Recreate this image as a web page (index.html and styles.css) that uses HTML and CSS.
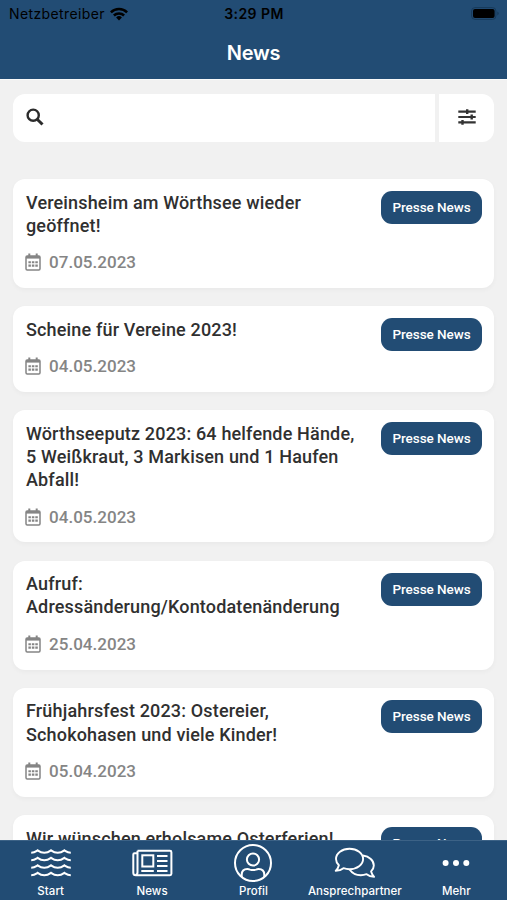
FILE: index.html
```html
<!DOCTYPE html>
<html lang="de">
<head>
<meta charset="utf-8">
<meta name="viewport" content="width=device-width, initial-scale=1">
<title>News</title>
<link rel="stylesheet" href="styles.css">
</head>
<body>
<svg width="0" height="0" class="defs" aria-hidden="true">
  <symbol id="calendar" viewBox="0 0 16 18">
    <path d="M4.300.4v3M11.700.4v3" stroke="currentColor" stroke-width="2"/>
    <rect x="1" y="3" width="14" height="14" rx="1.200" fill="none" stroke="currentColor" stroke-width="1.500"/>
    <path d="M1 3h14v2.600H1z" fill="currentColor"/>
    <path d="M3.400 9.300h9.400M3.400 12.600h9.400" stroke="currentColor" stroke-width="2.100" stroke-dasharray="2.500 .950"/>
  </symbol>
</svg>
<div class="app">
  <header class="header">
    <div class="status">
      <div class="carrier">Netzbetreiber
        <svg class="wifi" viewBox="0 0 18 14"><g fill="none" stroke="#000" stroke-width="2.5"><path d="M.9 5.3a11.5 11.5 0 0 1 16.2 0"/><path d="M3.9 8.5a7.2 7.2 0 0 1 10.2 0"/></g><path d="M9 13.4 6.1 10.5a4.1 4.1 0 0 1 5.8 0z"/></svg>
      </div>
      <div class="time">3:29 PM</div>
      <svg class="battery" viewBox="0 0 28 13"><rect x=".6" y=".6" width="24.3" height="11.8" rx="3.4" fill="none" stroke="#173a5a"/><rect x="2" y="2" width="21.6" height="9" rx="2"/><path d="M26.3 4.6q1.4.6 1.4 1.9t-1.4 1.9z" fill="#173a5a"/></svg>
    </div>
    <h1 class="heading">News</h1>
  </header>
  <main class="content">
    <div class="search">
      <div class="field"><svg class="lens" viewBox="0 0 18 18"><circle cx="7.2" cy="7.2" r="5.6" fill="none" stroke="#2b2b2b" stroke-width="2.4"/><path d="m11.2 11.2 5.3 5.3" stroke="#2b2b2b" stroke-width="3"/></svg></div>
      <div class="filter"><svg class="sliders" viewBox="0 0 18 16"><path d="M.3 2.600h17.400M.3 8h17.400M.3 13.400h17.400" stroke="#333" stroke-width="2.200"/><path d="M9.200.2v4.800M13.700 5.600v4.800M4.500 11v4.800" stroke="#333" stroke-width="2.400"/></svg></div>
    </div>
    <article class="card"><div class="body"><h2 class="title">Vereinsheim am Wörthsee wieder<br>geöffnet!</h2><div class="date"><svg class="cal"><use href="#calendar"/></svg>07.05.2023</div></div><span class="tag">Presse News</span></article>
    <article class="card"><div class="body"><h2 class="title">Scheine für Vereine 2023!</h2><div class="date"><svg class="cal"><use href="#calendar"/></svg>04.05.2023</div></div><span class="tag">Presse News</span></article>
    <article class="card"><div class="body"><h2 class="title">Wörthseeputz 2023: 64 helfende Hände,<br>5 Weißkraut, 3 Markisen und 1 Haufen<br>Abfall!</h2><div class="date"><svg class="cal"><use href="#calendar"/></svg>04.05.2023</div></div><span class="tag">Presse News</span></article>
    <article class="card"><div class="body"><h2 class="title">Aufruf:<br>Adressänderung/Kontodatenänderung</h2><div class="date"><svg class="cal"><use href="#calendar"/></svg>25.04.2023</div></div><span class="tag">Presse News</span></article>
    <article class="card"><div class="body"><h2 class="title">Frühjahrsfest 2023: Ostereier,<br>Schokohasen und viele Kinder!</h2><div class="date"><svg class="cal"><use href="#calendar"/></svg>05.04.2023</div></div><span class="tag">Presse News</span></article>
    <article class="card"><div class="body"><h2 class="title">Wir wünschen erholsame Osterferien!</h2></div><span class="tag">Presse News</span></article>
  </main>
  <nav class="tabs">
    <div class="tab"><svg class="icon" viewBox="0 0 42 38"><g fill="none" stroke="#fff" stroke-width="2.100"><path id="wave" d="M1.200 8.700C4.500 8.700 5.500 7.700 7.600 6.300q6.700 4.800 13.400 0 6.700 4.800 13.400 0c2.100 1.400 3.100 2.400 6.400 2.400"/><use href="#wave" y="7.500"/><use href="#wave" y="15"/><use href="#wave" y="22.500"/></g></svg><span>Start</span></div>
    <div class="tab"><svg class="icon" viewBox="0 0 42 38"><g fill="none" stroke="#fff" stroke-width="2"><path d="M6.500 6.800h32.500q1.400 0 1.400 1.400v21.600q0 1.400-1.400 1.400H4.800q-2.500 0-2.500-2.500V10.500q0-1.200 1.200-1.200h3"/><path d="M6.500 6.800v21.500q0 2.500-2 2.700"/><rect x="11.300" y="11.300" width="11" height="11.200"/><path d="M26 12h10.500M26 17h10.500M26 22h10.500M10.300 27h12.500M26 27h10.500"/></g></svg><span>News</span></div>
    <div class="tab"><svg class="icon" viewBox="0 0 42 38"><g fill="none" stroke="#fff" stroke-width="2"><circle cx="21" cy="19" r="18"/><circle cx="21" cy="15.500" r="6.100"/><path d="M9.700 33v-2.200q0-5.700 5.700-5.700 1.300 0 2.600.5 3 1 6 0 1.300-.5 2.600-.5 5.700 0 5.700 5.700v2.200"/></g></svg><span>Profil</span></div>
    <div class="tab"><svg class="icon" viewBox="0 0 42 38"><g fill="none" stroke="#fff" stroke-width="1.900" stroke-linejoin="round"><path d="M15.500 4.800c7.500 0 13.600 4.500 13.600 10.200S23 25.200 15.500 25.200q-3.200 0-6-1-3.200 2.600-7.800 2.600 2.600-2.800 3.200-5.600Q2 18.500 2 15C2 9.300 8 4.800 15.500 4.800z"/><path d="M29 11.500c6.300.9 10.800 5 10.800 9.900q0 3.300-2.700 6 .7 2.700 3 5.400-4.300 0-7.500-2.600-2.700 1-5.800 1-7.300 0-11.400-6"/></g></svg><span>Ansprechpartner</span></div>
    <div class="tab"><svg class="icon" viewBox="0 0 42 38"><g fill="#fff"><circle cx="10.600" cy="19" r="3"/><circle cx="21" cy="19" r="3"/><circle cx="31.300" cy="19" r="3"/></g></svg><span>Mehr</span></div>
  </nav>
</div>
</body>
</html>
```
FILE: styles.css
```css
* { box-sizing: border-box; }
body { margin: 0; font-family: Roboto, sans-serif; background: #f1f1f1; }
.defs { position: absolute; }
.app { height: 900px; display: flex; flex-direction: column; overflow: hidden; }
.header { flex: none; height: 79px; background: #224c74; }
.status { height: 27px; padding: 0 8px 0 9px; display: grid; grid-template-columns: 1fr auto 1fr; align-items: center; font: 400 14px Inter, sans-serif; color: #000; }
.carrier { display: flex; align-items: center; gap: 5px; letter-spacing: .38px; }
.wifi { width: 18px; height: 14px; }
.time { font-weight: 600; letter-spacing: .45px; }
.battery { width: 28px; height: 13px; justify-self: end; }
.heading { margin: 0; text-align: center; color: #fff; font: 600 20px/52px Inter, sans-serif; letter-spacing: -.2px; }
.content { flex: 1; min-height: 0; overflow: hidden; padding: 13.500px 13px 0; border-top: 1px solid #fafafa; }
.search { display: flex; gap: 4px; height: 48px; margin-bottom: 37.500px; }
.field { flex: 1; background: #fff; border-radius: 12px 0 0 12px; display: flex; align-items: center; padding-left: 12.500px; }
.filter { width: 55px; background: #fff; border-radius: 0 12px 12px 0; display: flex; align-items: center; justify-content: center; }
.lens { width: 18px; height: 18px; margin-top: -1px; }
.sliders { width: 18px; height: 16px; margin-top: -1px; }
.card { display: flex; justify-content: space-between; align-items: flex-start; margin-bottom: 18.250px; padding: 11.500px 12px 14.200px 13px; background: #fff; border-radius: 12px; box-shadow: 0 2px 5px rgba(0, 0, 0, .035); }
.title { margin: 0 0 13.700px; font-size: 18px; line-height: 23.200px; font-weight: 500; letter-spacing: .16px; color: #303030; white-space: nowrap; }
.date { display: flex; align-items: center; gap: 8px; height: 23.200px; font-size: 17px; font-weight: 500; letter-spacing: .03px; color: #858585; }
.cal { width: 16px; height: 18px; margin: 0 0 0 -1px; }
.tag { flex: none; width: 101px; height: 33px; margin-top: .5px; border-radius: 11px; background: #224c74; color: #fff; text-align: center; font-size: 13.500px; line-height: 32.500px; font-weight: 500; letter-spacing: -.05px; }
.tabs { flex: none; height: 60px; display: grid; grid-template-columns: repeat(5, 1fr); background: #224c74; border-top: 1px solid #3c6286; }
.tab { display: flex; flex-direction: column; align-items: center; min-width: 0; padding-top: 3px; color: #fff; font: 500 11.500px/15px Inter, sans-serif; letter-spacing: .04px; }
.icon { width: 42px; height: 38px; margin-bottom: 2px; flex: none; }
```
